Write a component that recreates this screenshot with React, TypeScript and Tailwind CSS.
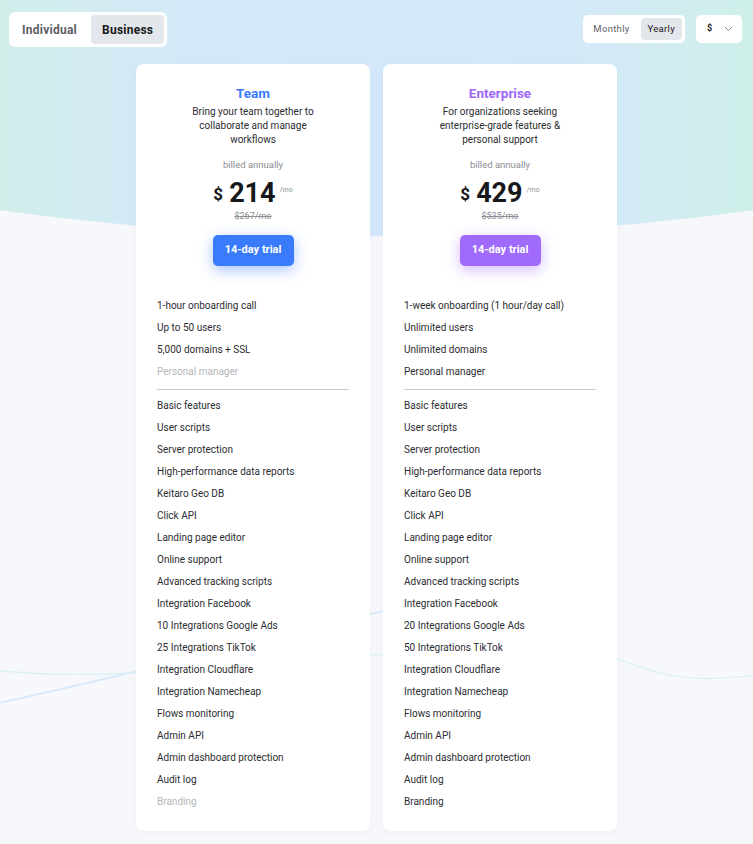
import React from 'react';

interface Feature {
  label: string;
  off?: boolean;
}

interface Plan {
  name: string;
  tone: 'blue' | 'purple';
  description: string[];
  price: number;
  oldPrice: number;
  top: Feature[];
  rest: Feature[];
}

const common = [
  'Basic features',
  'User scripts',
  'Server protection',
  'High-performance data reports',
  'Keitaro Geo DB',
  'Click API',
  'Landing page editor',
  'Online support',
  'Advanced tracking scripts',
  'Integration Facebook',
];

const plans: Plan[] = [
  {
    name: 'Team',
    tone: 'blue',
    description: ['Bring your team together to', 'collaborate and manage', 'workflows'],
    price: 214,
    oldPrice: 267,
    top: [
      { label: '1-hour onboarding call' },
      { label: 'Up to 50 users' },
      { label: '5,000 domains + SSL' },
      { label: 'Personal manager', off: true },
    ],
    rest: [
      ...common.map(label => ({ label })),
      { label: '10 Integrations Google Ads' },
      { label: '25 Integrations TikTok' },
      { label: 'Integration Cloudflare' },
      { label: 'Integration Namecheap' },
      { label: 'Flows monitoring' },
      { label: 'Admin API' },
      { label: 'Admin dashboard protection' },
      { label: 'Audit log' },
      { label: 'Branding', off: true },
    ],
  },
  {
    name: 'Enterprise',
    tone: 'purple',
    description: ['For organizations seeking', 'enterprise-grade features &', 'personal support'],
    price: 429,
    oldPrice: 535,
    top: [
      { label: '1-week onboarding (1 hour/day call)' },
      { label: 'Unlimited users' },
      { label: 'Unlimited domains' },
      { label: 'Personal manager' },
    ],
    rest: [
      ...common.map(label => ({ label })),
      { label: '20 Integrations Google Ads' },
      { label: '50 Integrations TikTok' },
      { label: 'Integration Cloudflare' },
      { label: 'Integration Namecheap' },
      { label: 'Flows monitoring' },
      { label: 'Admin API' },
      { label: 'Admin dashboard protection' },
      { label: 'Audit log' },
      { label: 'Branding' },
    ],
  },
];

const Backdrop: React.FC = () => (
  <svg className="absolute inset-0 h-full w-full" viewBox="0 0 753 844" preserveAspectRatio="none">
    <defs>
      <linearGradient id="sky" x1="0" y1="0" x2="1" y2="0">
        <stop offset="0" stopColor="#d0eeea" />
        <stop offset="0.2" stopColor="#d4eaf7" />
        <stop offset="0.5" stopColor="#d5e8fb" />
        <stop offset="0.8" stopColor="#d4eaf7" />
        <stop offset="1" stopColor="#cff0ea" />
      </linearGradient>
    </defs>
    <rect width="753" height="844" fill="#f7f8fc" />
    <path d="M0 0 H753 V210 Q376 262 0 210 Z" fill="url(#sky)" />
    {/* waves, mostly hidden behind the cards */}
    <path d="M0 702 C120 676 260 640 376 612 S540 580 600 570" fill="none" stroke="#d3e8fb" strokeWidth="1.6" />
    <path d="M0 670 C60 676 120 674 200 668 S330 652 376 654 S560 636 620 659 S700 679 753 675" fill="none" stroke="#dcf1f5" strokeWidth="1.4" />
  </svg>
);

const PlanCard: React.FC<{ plan: Plan }> = ({ plan }) => {
  const blue = plan.tone === 'blue';
  const featureRow = (f: Feature) => (
    <li key={f.label} className={`h-[22px] leading-[22px] ${f.off ? 'text-[#b4b6bb]' : 'text-[#2b2d31]'}`}>
      {f.label}
    </li>
  );

  return (
    <div className="flex w-[234px] flex-col rounded-[8px] bg-white pt-[20px] pb-[18px] shadow-[0_2px_10px_rgba(120,130,160,0.06)]">
      <div className="flex flex-col items-center text-center">
        <h3 className={`text-[13.5px] leading-[18px] font-bold ${blue ? 'text-[#3a7bfc]' : 'text-[#9d68fb]'}`}>
          {plan.name}
        </h3>
        <p className="mt-[3px] text-[10px] leading-[14px] text-[#2b2d31]">
          {plan.description.map(line => (
            <span key={line} className="block">
              {line}
            </span>
          ))}
        </p>
        <span className="mt-[11px] text-[9.5px] leading-[14px] text-[#8a8d93]">billed annually</span>
        <div className="mt-[5px] flex items-start text-[#17181b]">
          <span className="mt-[7px] text-[17px] leading-[20px] font-bold">$</span>
          <span className="ml-[6px] text-[27px] leading-[32px] font-bold">{plan.price}</span>
          <span className="mt-[8px] ml-[4px] text-[7px] leading-[10px] text-[#8a8d93]">/mo</span>
        </div>
        <span className="mt-[1px] text-[9px] leading-[12px] text-[#8a8d93] line-through">${plan.oldPrice}/mo</span>
        <button
          className={`mt-[13px] h-[31px] w-[81px] rounded-[5px] text-[11px] font-bold text-white ${
            blue
              ? 'bg-[#3a7bfc] shadow-[0_4px_14px_rgba(58,123,252,0.45)]'
              : 'bg-[#a06bfc] shadow-[0_4px_14px_rgba(160,107,252,0.45)]'
          }`}
        >
          14-day trial
        </button>
      </div>

      <div className="mt-[29px] px-[21px] text-[10px]">
        <ul>{plan.top.map(featureRow)}</ul>
        <div className="mt-[6px] mb-[5px] h-px bg-[#c9cbcf]" />
        <ul>{plan.rest.map(featureRow)}</ul>
      </div>
    </div>
  );
};

const App: React.FC = () => {
  return (
    <div className="relative min-h-screen w-full overflow-hidden font-['Roboto',sans-serif]">
      <Backdrop />
      <div className="relative flex flex-col">
        {/* Top controls */}
        <div className="flex items-start justify-between pt-[12px] pr-[11px] pl-[9px]">
          <div className="flex h-[35px] items-center gap-[4px] rounded-[6px] bg-white p-[3px] text-[12px] font-bold tracking-[0.25px]">
            <span className="flex h-full items-center px-[10px] text-[#5d6066]">Individual</span>
            <span className="flex h-full items-center rounded-[4px] bg-[#e3e6ea] px-[11px] text-[#17181b]">Business</span>
          </div>
          <div className="mt-[3px] flex gap-[11px]">
            <div className="flex h-[28px] items-center rounded-[5px] bg-white p-[3px] text-[9.5px] tracking-[0.3px]">
              <span className="pr-[11px] pl-[7px] text-[#5d6066]">Monthly</span>
              <span className="flex h-full items-center rounded-[4px] bg-[#e3e6ea] px-[7px] text-[#17181b]">Yearly</span>
            </div>
            <div className="flex h-[28px] w-[46px] items-center justify-between rounded-[5px] bg-white pr-[9px] pl-[11px] text-[9px] font-bold text-[#17181b]">
              <span>$</span>
              <svg width="9" height="6" viewBox="0 0 9 6" fill="none" stroke="#8a8d93" strokeWidth="1">
                <path d="M1 1l3.5 3.5L8 1" />
              </svg>
            </div>
          </div>
        </div>

        {/* Plans */}
        <div className="mt-[17px] flex justify-center gap-[13px] pb-[14px]">
          {plans.map(p => (
            <PlanCard key={p.name} plan={p} />
          ))}
        </div>
      </div>
    </div>
  );
};

export default App;
